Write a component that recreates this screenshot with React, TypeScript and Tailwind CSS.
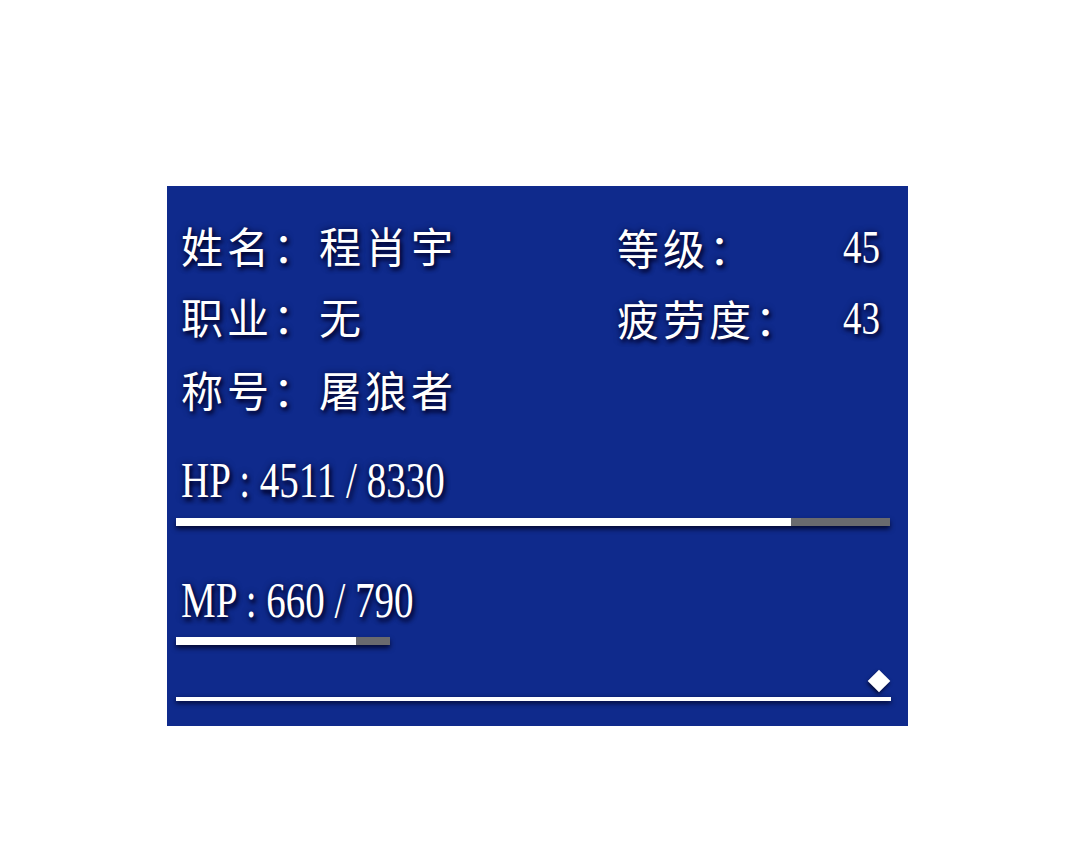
import type { ReactNode } from 'react'

const cjk = "font-['Noto_Sans_CJK_SC','Noto_Sans_CJK_JP',sans-serif]"
const serif = "font-['Liberation_Serif','Times_New_Roman',serif]"
const glow = '[text-shadow:2px_3px_4px_rgba(0,0,40,0.95),0_0_6px_rgba(0,0,40,0.7)]'

function Label({ children }: { children: ReactNode }) {
  return <span className={`${cjk} text-[42px] leading-none tracking-[4px] text-white ${glow}`}>{children}</span>
}

function Num({ children }: { children: ReactNode }) {
  return (
    <span className={`${serif} inline-block text-[37px] leading-none text-white scale-y-[1.28] ${glow}`}>
      {children}
    </span>
  )
}

function Gauge({ width, value, max }: { width: number; value: number; max: number }) {
  const pct = (value / max) * 100
  return (
    <div
      className="h-[8px] bg-[#6a6a6e] shadow-[0_3px_5px_rgba(0,0,30,0.8)]"
      style={{ width }}
    >
      <div className="h-full bg-white" style={{ width: `${pct}%` }} />
    </div>
  )
}

function StatLine({ children }: { children: ReactNode }) {
  return (
    <div className="h-[50px] pl-[5px] flex items-center">
      <span className={`${serif} inline-block text-[39px] leading-none text-white whitespace-pre scale-y-[1.28] origin-left ${glow}`}>
        {children}
      </span>
    </div>
  )
}

export default function App() {
  return (
    <div className="min-h-screen bg-white pt-[186px] pl-[167px]">
      <div className="w-[741px] h-[540px] bg-[#0f2a8c] pt-[25px] px-[9px] flex flex-col">
        <div className="flex flex-col">
          <div className="h-[71px] pl-[5px] flex items-center">
            <div className="w-[436px]"><Label>姓名：程肖宇</Label></div>
            <div className="w-[263px] flex items-center justify-between">
              <Label>等级：</Label>
              <Num>45</Num>
            </div>
          </div>
          <div className="h-[71px] pl-[5px] flex items-center">
            <div className="w-[436px]"><Label>职业：无</Label></div>
            <div className="w-[263px] flex items-center justify-between">
              <Label>疲劳度：</Label>
              <Num>43</Num>
            </div>
          </div>
          <div className="h-[71px] pl-[5px] flex items-center">
            <Label>称号：屠狼者</Label>
          </div>
        </div>

        <div className="mt-[30px]">
          <StatLine>HP : 4511 / 8330</StatLine>
        </div>
        <div className="mt-[14px]">
          <Gauge width={714} value={4511} max={5236} />
        </div>

        <div className="mt-[48px]">
          <StatLine>MP : 660 / 790</StatLine>
        </div>
        <div className="mt-[13px]">
          <Gauge width={214} value={660} max={784} />
        </div>

        {/* continue marker above the footer rule */}
        <div className="mt-[23px] w-[715px] h-[25px] flex justify-end">
          <div className="w-[25px] h-[25px] flex items-center justify-center">
            <div className="w-[16px] h-[16px] bg-white rotate-45 shadow-[1px_2px_4px_rgba(0,0,30,0.8)]" />
          </div>
        </div>
        <div className="mt-[4px] w-[715px] h-[4px] bg-white shadow-[0_2px_5px_rgba(0,0,30,0.9)]" />
      </div>
    </div>
  )
}
